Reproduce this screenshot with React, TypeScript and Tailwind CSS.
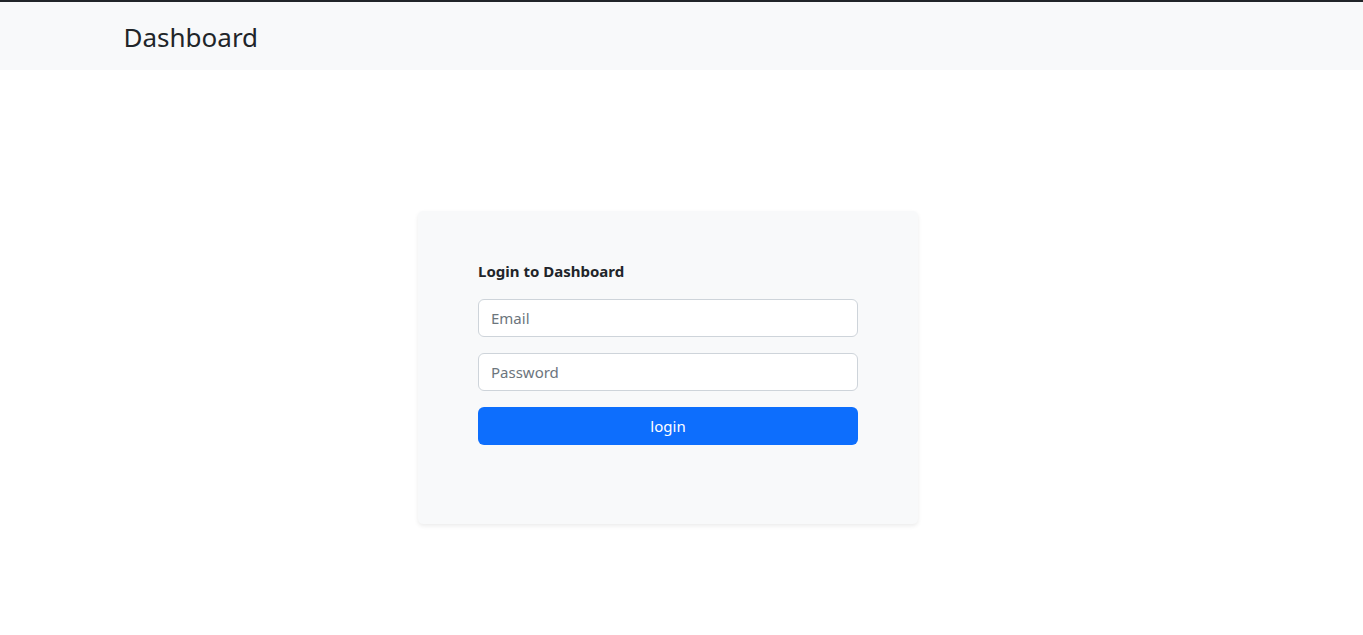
export default function App() {
  const font = { fontFamily: '"Noto Sans", "Open Sans", sans-serif' };
  return (
    <div className="min-h-[635px] bg-white text-[#212529]" style={font}>
      <div className="h-[2px] bg-[#212529]" />
      <nav className="h-[68px] bg-[#f8f9fa] flex items-center">
        <div className="w-[1140px] mx-auto px-3 pt-[4px]">
          <span className="text-[26px] leading-none font-normal">Dashboard</span>
        </div>
      </nav>
      <div className="pt-[141px]">
        <div className="ml-[418px] w-[500px] h-[313px] bg-[#f8f9fa] rounded-[5px] shadow-[0_2px_4px_rgba(0,0,0,0.08)] px-[60px] pt-[51px]">
          <h5 className="text-[15px] font-bold leading-[18px] mb-[19px]">Login to Dashboard</h5>
          <div className="flex flex-col gap-4">
            <input
              placeholder="Email"
              className="h-[38px] w-full bg-white border border-[#ced4da] rounded-[6px] px-3 text-[15px] placeholder:text-[#6c757d] outline-none"
            />
            <input
              placeholder="Password"
              type="password"
              className="h-[38px] w-full bg-white border border-[#ced4da] rounded-[6px] px-3 text-[15px] placeholder:text-[#6c757d] outline-none"
            />
            <button className="h-[38px] w-full bg-[#0d6efd] text-white rounded-[6px] text-[15px]">login</button>
          </div>
        </div>
      </div>
    </div>
  );
}
